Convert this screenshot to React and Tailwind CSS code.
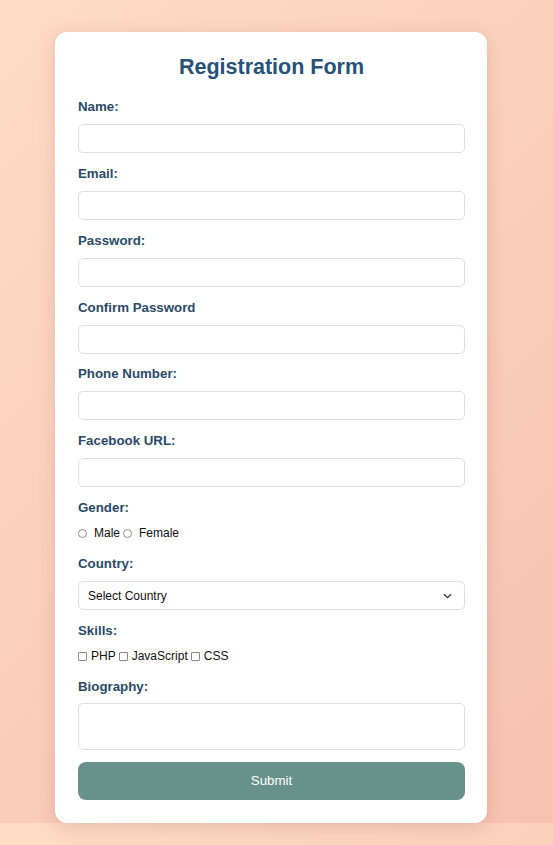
import React from "react";

const labelCls = "block text-[13.3px] leading-[16px] font-bold text-[#2b4a66] mb-[9px]";

function Field({ label, tight }) {
  return (
    <div>
      <label className={labelCls}>{label}</label>
      <div
        className={
          tight
            ? "block w-full h-[29px] rounded-[5px] border border-[#dcdfe5] bg-white mb-[12px]"
            : "block w-full h-[29px] rounded-[5px] border border-[#dcdfe5] bg-white mb-[13px]"
        }
      ></div>
    </div>
  );
}

function Radio() {
  return <span className="inline-block w-[9px] h-[9px] rounded-full border border-[#8a8a8a] bg-white shrink-0"></span>;
}

function Check() {
  return <span className="inline-block w-[9px] h-[9px] rounded-[1px] border border-[#8a8a8a] bg-white shrink-0"></span>;
}

export default function App() {
  return (
    <div
      className="h-[845px] w-full bg-[linear-gradient(135deg,#fddcc6,#f8c1b1)] bg-[length:100%_823px] bg-repeat"
      style={{ fontFamily: '"Liberation Sans", Arial, sans-serif' }}
    >
      <div className="pt-8 pl-[55px] flex">
        <div className="w-[432px] bg-white rounded-[12px] shadow-[0_4px_18px_rgba(150,90,70,0.22)] pl-[23px] pr-[22px] pt-[23px] pb-[23px]">
          <h2 className="text-[21.5px] leading-[25px] font-bold text-[#265178] text-center mb-[19px]">
            Registration Form
          </h2>
          <Field label="Name:" />
          <Field label="Email:" />
          <Field label="Password:" />
          <Field label="Confirm Password" tight />
          <Field label="Phone Number:" />
          <Field label="Facebook URL:" />

          <label className={labelCls}>Gender:</label>
          <div className="flex items-center h-[16px] text-[12px] text-[#111] mb-[15px]">
            <Radio />
            <span className="ml-[7px] mr-[3px]">Male</span>
            <Radio />
            <span className="ml-[7px]">Female</span>
          </div>

          <label className={labelCls}>Country:</label>
          <div className="flex items-center justify-between w-full h-[29px] rounded-[5px] border border-[#dcdfe5] bg-white mb-[13px] pl-[9px] pr-[12px] text-[12px] text-[#111]">
            <span>Select Country</span>
            <svg width="9" height="6" viewBox="0 0 9 6" fill="none">
              <path d="M1 1.2 L4.5 4.6 L8 1.2" stroke="#333" strokeWidth="1.3" />
            </svg>
          </div>

          <label className={labelCls}>Skills:</label>
          <div className="flex items-center h-[16px] text-[12px] text-[#111] mb-[15px]">
            <Check />
            <span className="ml-[4px] mr-[3px]">PHP</span>
            <Check />
            <span className="ml-[4px] mr-[3px]">JavaScript</span>
            <Check />
            <span className="ml-[4px]">CSS</span>
          </div>

          <label className="block text-[13.3px] leading-[16px] font-bold text-[#2b4a66] mb-[8px]">Biography:</label>
          <div className="block w-full h-[47px] rounded-[5px] border border-[#dcdfe5] bg-white mb-[12px]"></div>

          <button className="w-full h-[38px] rounded-[8px] bg-[#67918a] text-white text-[13.3px] flex items-center justify-center">
            Submit
          </button>
        </div>
      </div>
    </div>
  );
}
